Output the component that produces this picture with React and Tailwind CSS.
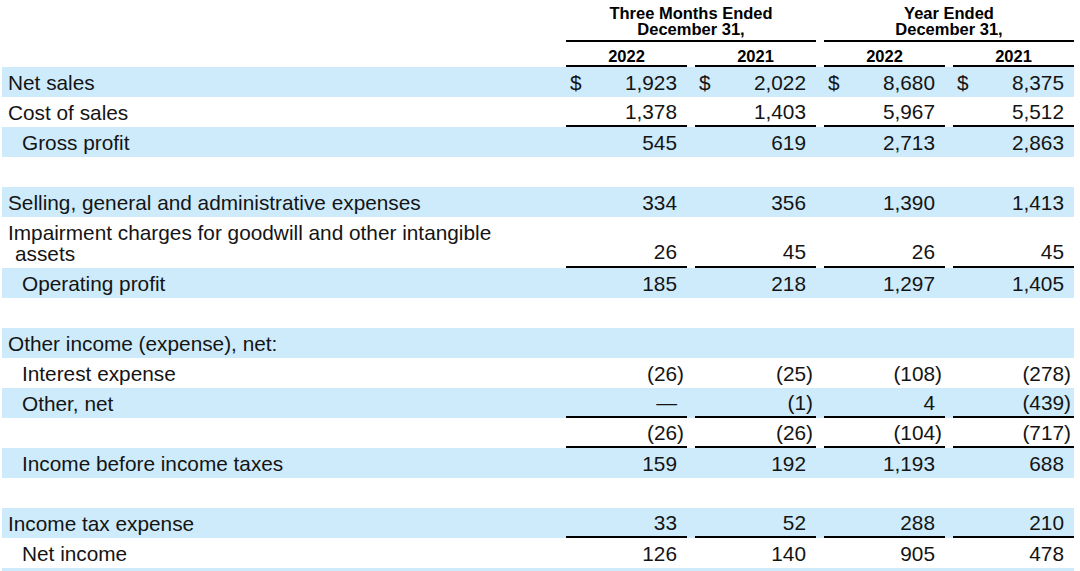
const rows = [
  { label: 'Net sales', vals: ['1,923', '2,022', '8,680', '8,375'], blue: true, dollar: true },
  { label: 'Cost of sales', vals: ['1,378', '1,403', '5,967', '5,512'], line: true },
  { label: 'Gross profit', indent: true, vals: ['545', '619', '2,713', '2,863'], blue: true },
  { blank: true },
  { label: 'Selling, general and administrative expenses', vals: ['334', '356', '1,390', '1,413'], blue: true },
  { label: 'Impairment charges for goodwill and other intangible', wrap: 'assets', vals: ['26', '45', '26', '45'], line: true, tall: true },
  { label: 'Operating profit', indent: true, vals: ['185', '218', '1,297', '1,405'], blue: true },
  { blank: true },
  { label: 'Other income (expense), net:', vals: ['', '', '', ''], blue: true },
  { label: 'Interest expense', indent: true, vals: ['(26)', '(25)', '(108)', '(278)'] },
  { label: 'Other, net', indent: true, vals: ['—', '(1)', '4', '(439)'], blue: true, line: true },
  { label: '', vals: ['(26)', '(26)', '(104)', '(717)'], line: true },
  { label: 'Income before income taxes', indent: true, vals: ['159', '192', '1,193', '688'], blue: true },
  { blank: true },
  { label: 'Income tax expense', vals: ['33', '52', '288', '210'], blue: true, line: true },
  { label: 'Net income', indent: true, vals: ['126', '140', '905', '478'] },
  { blank: true, blue: true },
]

const Num = ({ v }) => {
  if (v.endsWith(')')) {
    return (
      <span>
        {v.slice(0, -1)}
        <span className="-mr-[7px]">)</span>
      </span>
    )
  }
  return <span>{v}</span>
}

const Row = ({ row }) => {
  const bg = row.blue ? 'bg-[#cdebfb]' : ''
  if (row.blank) {
    return <div className={`h-[30px] ${bg}`}></div>
  }
  const h = row.tall ? 'h-[51px]' : 'h-[30px]'
  return (
    <div className={`flex ${h} ${bg}`}>
      <div className={`w-[564px] ${row.indent ? 'pl-[20px]' : 'pl-[6px]'} ${row.tall ? 'pt-[5px] leading-[21px]' : 'flex items-center pt-[2px]'}`}>
        {row.tall ? (
          <>
            <div>{row.label}</div>
            <div className="pl-[7px]">{row.wrap}</div>
          </>
        ) : (
          row.label
        )}
      </div>
      <div className="flex gap-[8px]">
        {row.vals.map((v, i) => (
          <div
            key={i}
            className={`w-[121px] flex ${row.tall ? 'items-end pb-[3px]' : 'items-center pt-[2px]'} ${row.dollar ? 'justify-between' : 'justify-end'} pl-[4px] pr-[10px] ${row.line ? 'border-b-2 border-black' : ''}`}
          >
            {row.dollar && <span>$</span>}
            <Num v={v} />
          </div>
        ))}
      </div>
    </div>
  )
}

const App = () => {
  return (
    <div
      className="w-[1080px] h-[571px] overflow-hidden bg-white text-[#141414] text-[20.8px] leading-none"
      style={{ fontFamily: '"Liberation Sans", Arial, sans-serif' }}
    >
      <div className="ml-[2px] w-[1072px]">
        {/* column headers */}
        <div className="flex h-[42px]">
          <div className="w-[564px]"></div>
          <div className="flex gap-[8px]">
            {['Three Months Ended', 'Year Ended'].map((t) => (
              <div key={t} className="w-[250px] h-[42px] border-b-2 border-black pt-[5px] text-center font-bold text-[16.5px] leading-[16px] text-black">
                <div>{t}</div>
                <div>December 31,</div>
              </div>
            ))}
          </div>
        </div>
        <div className="flex h-[25px]">
          <div className="w-[564px]"></div>
          <div className="flex gap-[8px]">
            {['2022', '2021', '2022', '2021'].map((y, i) => (
              <div key={i} className="w-[121px] h-[25px] border-b-2 border-black pt-[6px] text-center font-bold text-[16.5px] leading-[16px] text-black">
                {y}
              </div>
            ))}
          </div>
        </div>
        {rows.map((r, i) => (
          <Row key={i} row={r} />
        ))}
      </div>
    </div>
  )
}

export default App
